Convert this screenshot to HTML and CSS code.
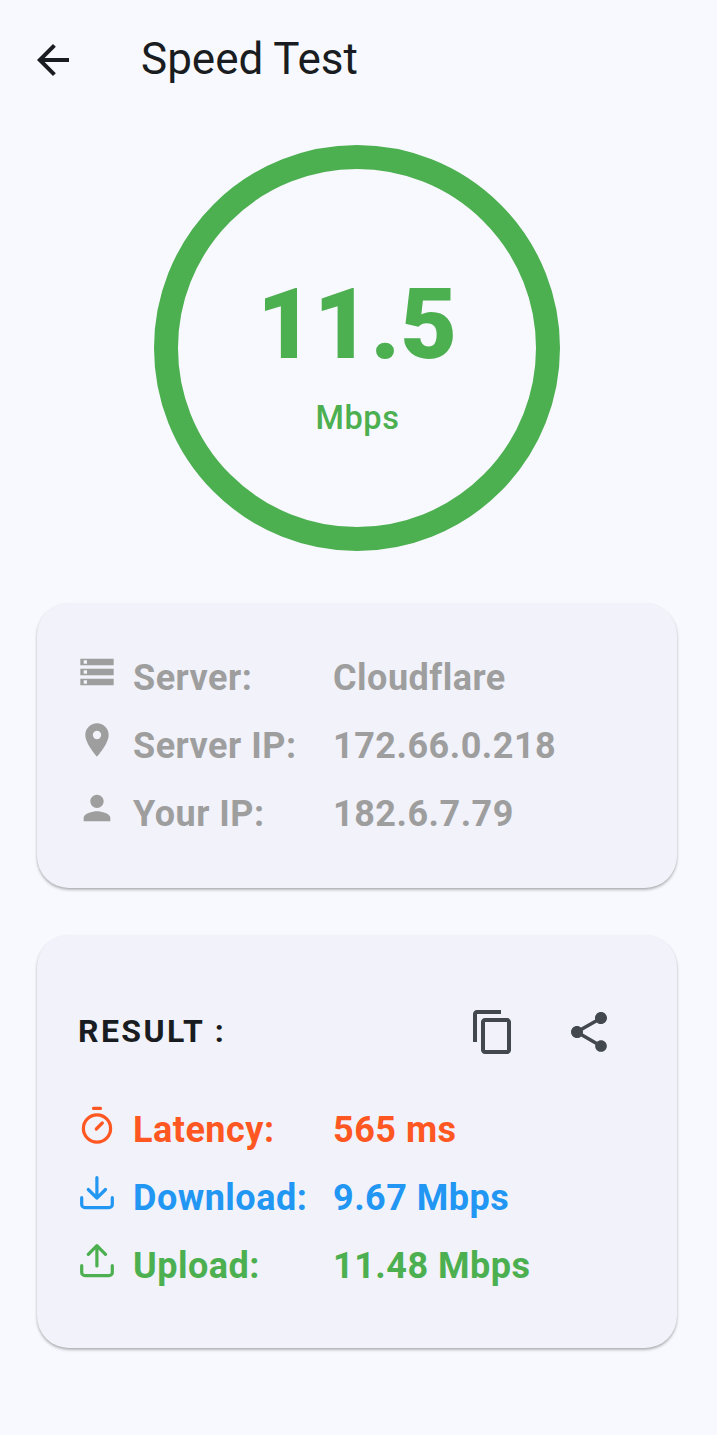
FILE: index.html
```html
<!DOCTYPE html>
<html lang="en">
<head>
<meta charset="utf-8">
<title>Speed Test</title>
<link rel="stylesheet" href="styles.css">
</head>
<body>
<header class="app-bar">
  <svg class="back" viewBox="0 0 24 24"><path d="M20 11H7.83l5.59-5.59L12 4l-8 8 8 8 1.41-1.41L7.83 13H20v-2z"/></svg>
  <h1 class="title">Speed Test</h1>
</header>
<main class="content">
  <section class="gauge">
    <div class="speed">11.5</div>
    <div class="unit">Mbps</div>
  </section>

  <section class="card server-card">
    <div class="row">
      <svg class="icon" viewBox="0 0 24 24"><path d="M2 20h20v-4H2v4zm2-3h2v2H4v-2zM2 4v4h20V4H2zm4 3H4V5h2v2zm-4 7h20v-4H2v4zm2-3h2v2H4v-2z"/></svg>
      <span class="label">Server:</span><span class="value">Cloudflare</span>
    </div>
    <div class="row">
      <svg class="icon" viewBox="0 0 24 24"><path d="M12 2C8.13 2 5 5.13 5 9c0 5.25 7 13 7 13s7-7.75 7-13c0-3.87-3.13-7-7-7zm0 9.5a2.5 2.5 0 0 1 0-5 2.5 2.5 0 0 1 0 5z"/></svg>
      <span class="label">Server IP:</span><span class="value">172.66.0.218</span>
    </div>
    <div class="row">
      <svg class="icon" viewBox="0 0 24 24"><path d="M12 12c2.21 0 4-1.79 4-4s-1.79-4-4-4-4 1.79-4 4 1.79 4 4 4zm0 2c-2.67 0-8 1.34-8 4v2h16v-2c0-2.66-5.33-4-8-4z"/></svg>
      <span class="label">Your IP:</span><span class="value">182.6.7.79</span>
    </div>
  </section>

  <section class="card result-card">
    <div class="result-head">
      <h2 class="result-title">RESULT :</h2>
      <svg class="action" viewBox="0 0 24 24"><path d="M16 1H4c-1.1 0-2 .9-2 2v14h2V3h12V1zm3 4H8c-1.100 0-2 .9-2 2v14c0 1.100.9 2 2 2h11c1.100 0 2-.9 2-2V7c0-1.100-.9-2-2-2zm0 16H8V7h11v14z"/></svg>
      <svg class="action" viewBox="0 0 24 24"><path d="M18 16.080c-.76 0-1.440.3-1.960.77L8.910 12.700c.05-.23.09-.46.09-.7s-.04-.47-.09-.7l7.050-4.110c.54.5 1.250.81 2.040.81 1.660 0 3-1.340 3-3s-1.340-3-3-3-3 1.340-3 3c0 .24.04.47.09.7L8.040 9.810C7.500 9.310 6.790 9 6 9c-1.660 0-3 1.340-3 3s1.340 3 3 3c.79 0 1.500-.31 2.040-.81l7.120 4.160c-.05.21-.08.43-.08.65 0 1.610 1.310 2.920 2.920 2.920s2.920-1.310 2.920-2.920-1.310-2.920-2.920-2.920z"/></svg>
    </div>
    <div class="row latency">
      <svg class="icon line" viewBox="0 0 40 40"><circle cx="20" cy="24.5" r="13.6"/><path d="M19.300 25l6-6M16.500 4.400h7"/></svg>
      <span class="label">Latency:</span><span class="value">565 ms</span>
    </div>
    <div class="row download">
      <svg class="icon line" viewBox="0 0 40 40"><path d="M19.900 5.700V26M11.300 17.500l8.600 8.600 8.600-8.600M4.700 25.700v6.700a3.300 3.300 0 0 0 3.300 3.300h24a3.300 3.300 0 0 0 3.300-3.300v-6.700"/></svg>
      <span class="label">Download:</span><span class="value">9.67 Mbps</span>
    </div>
    <div class="row upload">
      <svg class="icon line" viewBox="0 0 40 40"><path d="M19.900 26V5.700M11.300 14.300l8.600-8.600 8.600 8.600M4.700 25.700v6.700a3.300 3.300 0 0 0 3.300 3.300h24a3.300 3.300 0 0 0 3.300-3.300v-6.700"/></svg>
      <span class="label">Upload:</span><span class="value">11.48 Mbps</span>
    </div>
  </section>
</main>
</body>
</html>
```

FILE: styles.css
```css
* { box-sizing: border-box; }
body {
  margin: 0;
  min-height: 1435px;
  background: #f8f9fe;
  color: #191c20;
  font-family: Roboto, sans-serif;
}
.app-bar {
  display: flex;
  align-items: center;
  height: 120px;
  padding-left: 29px;
}
.back { width: 48px; height: 48px; fill: currentColor; }
.title {
  margin: 0 0 2px 64px;
  font-size: 44px;
  font-weight: 400;
  line-height: 56px;
}
.content { padding: 25px 40px 0 37px; }
.gauge {
  display: flex;
  flex-direction: column;
  align-items: center;
  width: 406px;
  height: 406px;
  margin: 0 auto 52px;
  padding-top: 98px;
  border: 24px solid #4caf50;
  border-radius: 50%;
  color: #4caf50;
}
.speed { font-size: 98px; font-weight: 900; line-height: 116px; }
.unit {
  margin-top: 15px;
  padding-left: 1px;
  font-size: 32.5px;
  font-weight: 500;
  letter-spacing: .6px;
  line-height: 40px;
}
.card {
  border-radius: 32px;
  background: #f1f2fa;
  box-shadow: 0 2px 3px rgba(0, 0, 0, .25), 0 1px 2px rgba(0, 0, 0, .08);
}
.server-card {
  height: 285px;
  padding: 41px 40px 40px;
  color: #9e9e9e;
}
.result-card {
  height: 413px;
  margin-top: 47px;
  padding: 73px 40px 48px;
}
.row {
  display: grid;
  grid-template-columns: 40px 200px 1fr;
  column-gap: 16px;
  height: 68px;
  font-size: 36px;
  font-weight: 700;
  letter-spacing: .5px;
  line-height: 68px;
  white-space: nowrap;
}
.row .value { margin-left: -16px; }
.icon { width: 40px; height: 40px; margin-top: 8px; fill: currentColor; }
.line {
  fill: none;
  stroke: currentColor;
  stroke-width: 3.2;
  stroke-linecap: round;
  stroke-linejoin: round;
}
.result-head {
  display: flex;
  align-items: center;
  gap: 48px;
  height: 48px;
  margin-bottom: 40px;
  padding: 0 24px 0 1px;
}
.result-title {
  flex: 1;
  margin: 0 0 2px;
  font-size: 32px;
  font-weight: 700;
  letter-spacing: 2.4px;
  line-height: 48px;
}
.action { width: 48px; height: 48px; fill: #43474e; }
.latency { color: #ff5722; }
.download { color: #2196f3; }
.upload { color: #4caf50; }
```
